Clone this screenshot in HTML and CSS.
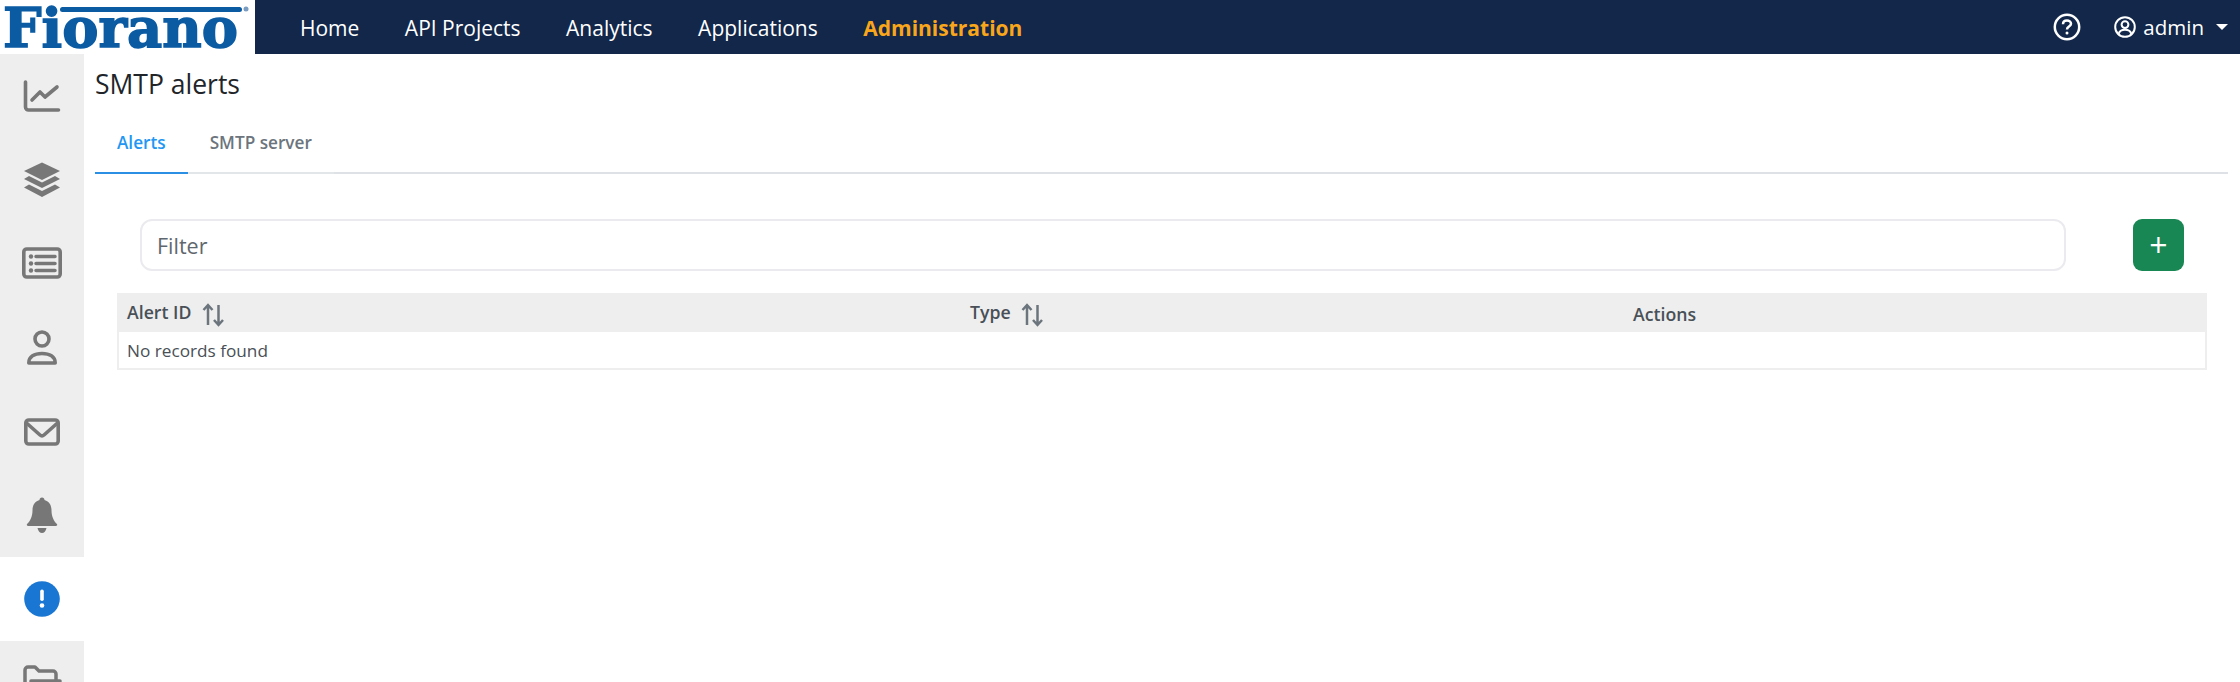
FILE: index.html
```html
<!DOCTYPE html>
<html lang="en">
<head>
<meta charset="utf-8">
<title>SMTP alerts</title>
<link rel="stylesheet" href="styles.css">
</head>
<body>
<header class="topbar">
  <div class="brand">
    <svg class="brand-logo" width="255" height="54" viewBox="0 0 255 54">
      <text class="logo-text" x="3" y="47" textLength="235" lengthAdjust="spacingAndGlyphs">Fiorano</text>
      <rect class="logo-fill" x="60" y="7" width="182" height="5" rx="2.5"/>
      <circle class="logo-reg" cx="246" cy="9" r="2.5"/>
    </svg>
  </div>
  <nav class="mainnav">
    <a class="navlink">Home</a>
    <a class="navlink">API Projects</a>
    <a class="navlink">Analytics</a>
    <a class="navlink">Applications</a>
    <a class="navlink navlink-active">Administration</a>
  </nav>
  <div class="userbar">
    <svg class="help-icon" width="28" height="28" viewBox="0 0 28 28">
      <circle class="line-white" cx="14" cy="14" r="12.2"/>
      <path class="line-white" d="M10 11.2c0-2.4 1.8-3.7 4-3.700s4 1.300 4 3.300c0 2.800-4 2.800-4 5.600"/>
      <circle class="fill-white" cx="14" cy="20" r="1.5"/>
    </svg>
    <div class="user">
      <svg width="22" height="22" viewBox="0 0 22 22">
        <circle class="line-white-thin" cx="11" cy="11" r="9.8"/>
        <circle class="line-white-thin" cx="11" cy="8.6" r="3.4"/>
        <path class="line-white-thin" d="M4.6 18c.8-3 3-4.2 6.4-4.2s5.600 1.200 6.400 4.200"/>
      </svg>
      <span class="user-name">admin</span>
      <span class="caret"></span>
    </div>
  </div>
</header>
<div class="shell">
  <aside class="sidebar">
    <div class="side-item">
      <svg width="40" height="40" viewBox="0 0 40 40"><path class="ico" d="M3.500 6V31a3 3 0 0 0 3 3H36.500"/><path class="ico" d="M10 24l8-8 5 5 12-10"/></svg>
    </div>
    <div class="side-item">
      <svg width="40" height="40" viewBox="0 1.500 40 40"><path class="ico-fill" d="M20 4l18 8.500-18 9-18-9z"/><path class="ico-fill" d="M7 17.500l13 6.500 13-6.500 5 3-18 9-18-9z"/><path class="ico-fill" d="M7 26l13 6.500L33 26l5 3-18 9.500L2 29z"/></svg>
    </div>
    <div class="side-item">
      <svg width="40" height="40" viewBox="0 0 40 40"><rect class="ico" x="1.800" y="6" width="36.400" height="28" rx="3"/><circle class="ico-fill" cx="9" cy="13.500" r="2.200"/><circle class="ico-fill" cx="9" cy="20.500" r="2.200"/><circle class="ico-fill" cx="9" cy="27.500" r="2.200"/><path class="ico-thin" d="M14 13.500H33M14 20.500H33M14 27.500H33"/></svg>
    </div>
    <div class="side-item">
      <svg width="40" height="40" viewBox="0 0 40 40"><circle class="ico" cx="20" cy="12" r="7"/><path class="ico" d="M6.800 36C6.800 29.500 12.500 26.500 20 26.500S33.200 29.500 33.200 36z"/></svg>
    </div>
    <div class="side-item">
      <svg width="40" height="40" viewBox="0 0 40 40"><rect class="ico" x="3.800" y="9" width="32.400" height="24" rx="3"/><path class="ico" d="M4.500 12L18 24a3 3 0 0 0 4 0L35.500 12"/></svg>
    </div>
    <div class="side-item">
      <svg width="40" height="40" viewBox="0 0 40 40"><path class="ico-fill" d="M20 2.500c1.500 0 2.500 1 2.500 2.500 5 1.500 7 5.500 7 10.500 0 6 2.500 11 5.500 13.500.5 1 0 2-1 2H6c-1 0-1.500-1-1-2 3-2.500 5.500-7.500 5.500-13.500 0-5 2-9 7-10.500 0-1.500 1-2.500 2.500-2.500z"/><path class="ico-fill" d="M15.500 33h9c-.5 3-2.500 5-4.500 5s-4-2-4.500-5z"/></svg>
    </div>
    <div class="side-item side-item-active">
      <svg width="40" height="40" viewBox="0 0 40 40"><circle class="ico-active" cx="20" cy="20" r="17.800"/><rect class="fill-white" x="18.200" y="10.500" width="3.600" height="11.500" rx="1.800"/><circle class="fill-white" cx="20" cy="26.500" r="2.300"/></svg>
    </div>
    <div class="side-item">
      <svg width="40" height="40" viewBox="0 0 40 40"><path class="ico-thin" d="M3 40V8a3 3 0 0 1 3-3h7l4 4h14a3 3 0 0 1 3 3v6M9 19h29"/></svg>
    </div>
  </aside>
  <main class="content">
    <h1 class="page-title">SMTP alerts</h1>
    <div class="tabs">
      <a class="tab tab-active">Alerts</a>
      <a class="tab">SMTP server</a>
    </div>
    <div class="toolbar">
      <input class="filter" type="text" placeholder="Filter">
      <button class="add-btn" type="button">+</button>
    </div>
    <table class="grid">
      <thead>
        <tr>
          <th class="col-id">Alert ID <svg class="sort" width="24" height="24" viewBox="0 0 24 24"><path class="sort-line" d="M7 22V2M2.500 7L7 2l4.500 5M17.500 2v20M13 17l4.500 5 4.500-5"/></svg></th>
          <th class="col-type">Type <svg class="sort" width="24" height="24" viewBox="0 0 24 24"><path class="sort-line" d="M7 22V2M2.500 7L7 2l4.500 5M17.500 2v20M13 17l4.500 5 4.500-5"/></svg></th>
          <th class="col-actions">Actions</th>
        </tr>
      </thead>
      <tbody>
        <tr><td colspan="3">No records found</td></tr>
      </tbody>
    </table>
  </main>
</div>
</body>
</html>
```
FILE: styles.css
```css
* { box-sizing: border-box; }
html, body { margin: 0; height: 682px; overflow: hidden; background: #fff; }
body { font-family: "Open Sans", "Noto Sans", sans-serif; color: #212529; }

.topbar { display: flex; align-items: center; height: 54px; background: #12274a; color: #fff; }
.brand { width: 255px; height: 54px; background: #fff; flex: none; }
.brand-logo { display: block; overflow: visible; }
.logo-fill { fill: #0b5ba3; }
.logo-reg { fill: #7a9cc0; }
.logo-text { font-family: "DejaVu Serif", serif; font-weight: 700; font-size: 54px; fill: #0b5ba3; stroke: #0b5ba3; stroke-width: 1.500px; }

.mainnav { display: flex; gap: 45.500px; padding: 1px 0 0 45px; flex: 1; }
.navlink { font-size: 21px; color: #fff; }
.navlink-active { color: #f9a61a; font-weight: 700; }

.userbar { display: flex; align-items: center; gap: 33px; padding-right: 12px; }
.help-icon { display: block; }
.user { display: flex; align-items: center; gap: 7px; }
.user svg { display: block; }
.user-name { font-size: 20.500px; }
.caret { width: 0; height: 0; margin-left: 5px; border-left: 6px solid transparent; border-right: 6px solid transparent; border-top: 6px solid #fff; }
.line-white { fill: none; stroke: #fff; stroke-width: 2.500; }
.line-white-thin { fill: none; stroke: #fff; stroke-width: 2; }
.fill-white { fill: #fff; }

.shell { display: flex; height: 628px; }
.sidebar { width: 84px; flex: none; height: 628px; overflow: hidden; background: #eee; }
.side-item { display: flex; align-items: center; justify-content: center; height: 83.800px; flex: none; }
.side-item svg { display: block; }
.side-item-active { background: #fff; }
.ico { fill: none; stroke: #777; stroke-width: 3.600; stroke-linecap: round; stroke-linejoin: round; }
.ico-thin { fill: none; stroke: #777; stroke-width: 3.500; stroke-linecap: round; stroke-linejoin: round; }
.ico-fill { fill: #777; }
.ico-active { fill: #1976d2; }

.content { flex: 1; min-width: 0; padding: 0 12px 0 11px; }
.page-title { margin: 0; height: 60px; padding-top: 12px; font-size: 26.500px; line-height: 36px; font-weight: 400; color: #212529; }
.tabs { display: flex; height: 60px; border-bottom: 2px solid #dee2e6; }
.tab { display: flex; align-items: center; height: 60px; padding: 0 22px 2px; margin-bottom: -2px; font-size: 17.200px; font-weight: 600; color: #6c757d; border-bottom: 2px solid #e3e6e9; }
.tab-active { color: #2196f3; border-bottom-color: #2b8fe3; }

.toolbar { display: flex; align-items: flex-start; margin-top: 45px; padding-left: 45px; }
.filter { width: 1926px; height: 52px; padding: 0 15px; border: 2px solid #ebebef; border-radius: 12px; font-family: inherit; font-size: 21.500px; color: #495057; background: #fff; outline: none; }
.filter::placeholder { color: #5f676e; opacity: 1; }
.add-btn { width: 51px; height: 52px; margin-left: 67px; border: 0; border-radius: 9px; background: #198754; color: #fff; font-family: inherit; font-size: 32px; line-height: 1; padding: 0; }

.grid { width: 2090px; margin: 22px 0 0 22px; table-layout: fixed; border-collapse: collapse; border: 2px solid #eee; border-top: 0; font-size: 17.200px; }
.grid th { height: 39px; padding: 2px 10px 0 9px; text-align: left; font-size: 17.700px; font-weight: 600; color: #495057; background: #eee; white-space: nowrap; }
.grid .col-id { width: 843px; padding-left: 8px; }
.grid td { height: 37px; padding: 1px 10px 0 8px; color: #495057; }
.col-type { width: 663px; }
.sort { display: inline-block; vertical-align: middle; margin-left: 4.500px; }
.sort-line { fill: none; stroke: #6c757d; stroke-width: 2.500; }
```
